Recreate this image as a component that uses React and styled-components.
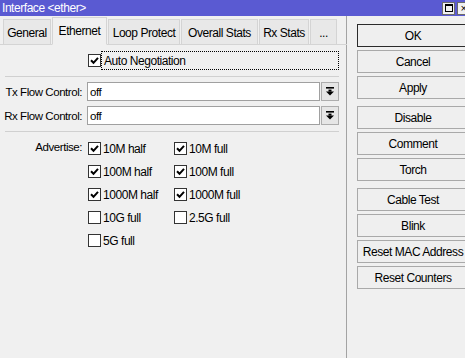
import styled, { createGlobalStyle } from "styled-components";

const GlobalStyle = createGlobalStyle`
  html, body {
    margin: 0;
    padding: 0;
    background: #f0f0f0;
    overflow: hidden;
  }
  body {
    font-family: "Liberation Sans", Arial, sans-serif;
    font-size: 11.5px;
    letter-spacing: -0.45px;
    color: #000;
  }
`;

const Window = styled.div`
  width: 465px;
  height: 358px;
  display: flex;
  flex-direction: column;
  overflow: hidden;
  background: #f0f0f0;
`;

const TitleBar = styled.div`
  height: 16px;
  flex: none;
  background: #5a5ad2;
  color: #fff;
  display: flex;
  align-items: center;
  padding-left: 2px;
`;

const TitleText = styled.span`
  flex: 1;
  line-height: 16px;
  font-size: 12px;
`;

const WinControls = styled.div`
  display: flex;
  gap: 2px;
  margin-right: -5px;
`;

const WinBox = styled.div`
  width: 13px;
  height: 13px;
  flex: none;
  box-sizing: border-box;
  background: #f0f0f0;
  border: 1px solid #6b6b6b;
  display: flex;
  align-items: center;
  justify-content: center;
  color: #000;
  font-size: 11px;
  line-height: 1;
`;

const MaxGlyph = styled.div`
  width: 8px;
  height: 8px;
  box-sizing: border-box;
  border: 1px solid #000;
  border-top-width: 2px;
`;

const Body = styled.div`
  flex: 1;
  display: flex;
  min-height: 0;
`;

const Panel = styled.div`
  width: 347px;
  flex: none;
  box-sizing: border-box;
  border-right: 1px solid #a3a3a3;
  display: flex;
  flex-direction: column;
`;

const TabStrip = styled.div`
  height: 29px;
  box-sizing: border-box;
  display: flex;
  align-items: flex-end;
  gap: 1px;
  padding-left: 3px;
  border-bottom: 1px solid #d4d4d4;
  margin-right: -1px;
`;

const Tab = styled.div`
  width: ${(p) => p.$w}px;
  height: ${(p) => (p.$active ? "28px" : "26px")};
  flex: none;
  box-sizing: border-box;
  margin-bottom: -1px;
  display: flex;
  align-items: center;
  justify-content: center;
  padding-top: ${(p) => (p.$active ? "0" : "1px")};
  background: ${(p) => (p.$active ? "#f0f0f0" : "#e8e8e8")};
  border: 1px solid #d4d4d4;
  border-bottom-color: ${(p) => (p.$active ? "#f0f0f0" : "#d4d4d4")};
  white-space: nowrap;
  font-size: 12px;
`;

const Content = styled.div`
  display: flex;
  flex-direction: column;
  padding: 6px 7px 0 0;
`;

const FormRow = styled.div`
  display: grid;
  grid-template-columns: 83px 1fr;
  column-gap: 4px;
  align-items: center;
  margin-top: ${(p) => p.$top || 0}px;
  height: ${(p) => p.$height || 19}px;
`;

const Label = styled.div`
  text-align: right;
  padding-right: 1px;
  white-space: nowrap;
  align-self: ${(p) => (p.$start ? "start" : "center")};
  line-height: ${(p) => (p.$start ? "21px" : "normal")};
`;

const Separator = styled.div`
  height: 0;
  border-top: 1px solid #d0d0d0;
  margin: ${(p) => p.$top}px 0 0 5px;
`;

const CheckLine = styled.div`
  display: flex;
  align-items: center;
  height: 100%;
  padding-left: 1px;
`;

const Box = styled.span`
  width: 13px;
  height: 13px;
  flex: none;
  box-sizing: border-box;
  background: #fff;
  border: 1px solid #333;
  display: flex;
  align-items: center;
  justify-content: center;
`;

const FocusText = styled.div`
  flex: 1;
  height: 19px;
  box-sizing: border-box;
  padding-left: 2px;
  border: 1px dotted #000;
  display: flex;
  align-items: center;
  font-size: 12px;
`;

const SelectLine = styled.div`
  display: flex;
  gap: 1px;
  height: 19px;
`;

const Input = styled.div`
  flex: 1;
  box-sizing: border-box;
  background: #fff;
  border: 1px solid #a0a0a0;
  padding-left: 2px;
  display: flex;
  align-items: center;
`;

const DropButton = styled.div`
  width: 18px;
  box-sizing: border-box;
  background: #e6e6e6;
  border: 1px solid #adadad;
  display: flex;
  align-items: center;
  justify-content: center;
`;

const OptionGrid = styled.div`
  display: grid;
  grid-template-columns: 86px 86px;
  grid-auto-rows: 23px;
  padding-left: 1px;
`;

const Option = styled.div`
  display: flex;
  align-items: center;
  gap: 2px;
  white-space: nowrap;
  font-size: 12px;
`;

const ButtonColumn = styled.div`
  display: flex;
  flex-direction: column;
  gap: 7px;
  padding: 8px 0 0 10px;
`;

const ButtonGroup = styled.div`
  display: flex;
  flex-direction: column;
  gap: 3px;
`;

const Button = styled.div`
  width: 112px;
  height: 23px;
  flex: none;
  box-sizing: border-box;
  background: #efefef;
  border: 1px solid ${(p) => (p.$default ? "#2b2b2b" : "#a9a9a9")};
  display: flex;
  align-items: center;
  justify-content: center;
  white-space: nowrap;
  font-size: 12px;
`;

function Check({ on }) {
  return (
    <Box>
      {on && (
        <svg width="9" height="9" viewBox="0 0 9 9">
          <path d="M1 4.3 L3.5 6.8 L8 1.8" fill="none" stroke="#000" strokeWidth="2" />
        </svg>
      )}
    </Box>
  );
}

function DropIcon() {
  return (
    <svg width="8" height="9" viewBox="0 0 8 9">
      <rect x="0" y="0" width="8" height="1.6" fill="#000" />
      <rect x="2.5" y="2.6" width="3" height="2" fill="#000" />
      <path d="M0 4.6 H8 L4 8.6 Z" fill="#000" />
    </svg>
  );
}

const tabs = [
  ["General", 48],
  ["Ethernet", 55],
  ["Loop Protect", 72],
  ["Overall Stats", 77],
  ["Rx Stats", 50],
  ["...", 27],
];

const options = [
  ["10M half", true],
  ["10M full", true],
  ["100M half", true],
  ["100M full", true],
  ["1000M half", true],
  ["1000M full", true],
  ["10G full", false],
  ["2.5G full", false],
  ["5G full", false],
];

const buttonGroups = [
  ["OK", "Cancel", "Apply"],
  ["Disable", "Comment", "Torch"],
  ["Cable Test", "Blink", "Reset MAC Address", "Reset Counters"],
];

export default function App() {
  return (
    <>
      <GlobalStyle />
      <Window>
        <TitleBar>
          <TitleText>Interface &lt;ether&gt;</TitleText>
          <WinControls>
            <WinBox>
              <MaxGlyph />
            </WinBox>
            <WinBox>×</WinBox>
          </WinControls>
        </TitleBar>
        <Body>
          <Panel>
            <TabStrip>
              {tabs.map(([t, w]) => (
                <Tab key={t} $w={w} $active={t === "Ethernet"}>
                  {t}
                </Tab>
              ))}
            </TabStrip>
            <Content>
              <FormRow>
                <span />
                <CheckLine>
                  <Check on />
                  <FocusText>Auto Negotiation</FocusText>
                </CheckLine>
              </FormRow>
              <Separator $top={6} />
              <FormRow $top={5}>
                <Label>Tx Flow Control:</Label>
                <SelectLine>
                  <Input>off</Input>
                  <DropButton>
                    <DropIcon />
                  </DropButton>
                </SelectLine>
              </FormRow>
              <FormRow $top={5}>
                <Label>Rx Flow Control:</Label>
                <SelectLine>
                  <Input>off</Input>
                  <DropButton>
                    <DropIcon />
                  </DropButton>
                </SelectLine>
              </FormRow>
              <Separator $top={6} />
              <FormRow $top={5} $height={115}>
                <Label $start>Advertise:</Label>
                <OptionGrid>
                  {options.map(([name, on]) => (
                    <Option key={name}>
                      <Check on={on} />
                      {name}
                    </Option>
                  ))}
                </OptionGrid>
              </FormRow>
            </Content>
          </Panel>
          <ButtonColumn>
            {buttonGroups.map((group, i) => (
              <ButtonGroup key={i}>
                {group.map((b) => (
                  <Button key={b} $default={b === "OK"}>
                    {b}
                  </Button>
                ))}
              </ButtonGroup>
            ))}
          </ButtonColumn>
        </Body>
      </Window>
    </>
  );
}
